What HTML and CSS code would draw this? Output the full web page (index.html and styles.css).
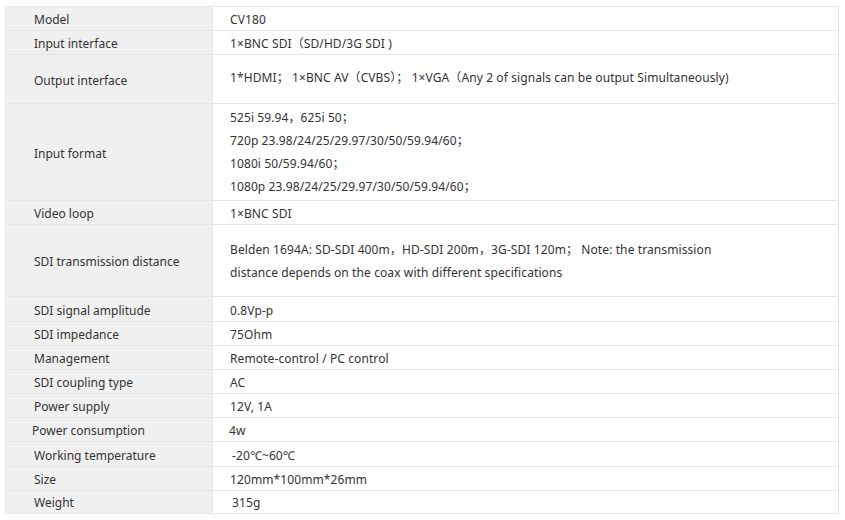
FILE: index.html
```html
<!DOCTYPE html>
<html lang="en">
<head>
  <meta charset="UTF-8" />
  <meta name="viewport" content="width=device-width, initial-scale=1.0"/>
  <title>CV180 Specifications</title>
  <link rel="stylesheet" href="styles.css">
</head>
<body>
  <table class="spec-table">
    <tr>
      <th>Model</th>
      <td>CV180</td>
    </tr>
    <tr>
      <th>Input interface</th>
      <td>1×BNC SDI（SD/HD/3G SDI )</td>
    </tr>
    <tr class="tall">
      <th>Output interface</th>
      <td class="out">1*HDMI； 1×BNC AV（CVBS）； 1×VGA（Any 2 of signals can be output Simultaneously)</td>
    </tr>
    <tr class="multi">
      <th>Input format</th>
      <td>
        525i 59.94，625i 50；<br>
        720p 23.98/24/25/29.97/30/50/59.94/60；<br>
        1080i 50/59.94/60；<br>
        1080p 23.98/24/25/29.97/30/50/59.94/60；
      </td>
    </tr>
    <tr>
      <th>Video loop</th>
      <td>1×BNC SDI</td>
    </tr>
    <tr class="tall">
      <th>SDI transmission distance</th>
      <td>Belden 1694A: SD-SDI 400m，HD-SDI 200m，3G-SDI 120m； Note: the transmission<br>
        distance depends on the coax with different specifications</td>
    </tr>
    <tr class="plus">
      <th>SDI signal amplitude</th>
      <td>0.8Vp-p</td>
    </tr>
    <tr>
      <th>SDI impedance</th>
      <td>75Ohm</td>
    </tr>
    <tr>
      <th>Management</th>
      <td>Remote-control / PC control</td>
    </tr>
    <tr>
      <th>SDI coupling type</th>
      <td>AC</td>
    </tr>
    <tr>
      <th>Power supply</th>
      <td>12V, 1A</td>
    </tr>
    <tr>
      <th class="shift">Power consumption</th>
      <td class="shift">4w</td>
    </tr>
    <tr class="plus">
      <th>Working temperature</th>
      <td class="nudge">-20℃~60℃</td>
    </tr>
    <tr>
      <th>Size</th>
      <td>120mm*100mm*26mm</td>
    </tr>
    <tr class="last">
      <th>Weight</th>
      <td class="nudge">315g</td>
    </tr>
  </table>
</body>
</html>
```

FILE: styles.css
```css
body {
  margin: 0;
  padding: 6px 0 0 5px;
  background: #fff;
  font-family: "Noto Sans", "Noto Sans CJK SC", sans-serif;
  font-size: 12px;
  color: #333;
}

.spec-table {
  width: 834px;
  border-collapse: collapse;
  border: 1px solid #e6e6e6;
}

.spec-table th,
.spec-table td {
  border-top: 1px solid #e6e6e6;
  line-height: 21px;
  padding: 2px 0 0 0;
  text-align: left;
  font-weight: normal;
  vertical-align: middle;
}

.spec-table th {
  width: 178px;
  padding-left: 28px;
  background: #f0f0f0;
  border-right: 1px solid #e6e6e6;
}

.spec-table td {
  padding-left: 17px;
  letter-spacing: 0.1px;
}

.spec-table .tall td {
  line-height: 23px;
  padding-top: 13px;
  padding-bottom: 12px;
}

.spec-table .tall td.out {
  padding-top: 11px;
  padding-bottom: 14px;
}

.spec-table .multi td {
  line-height: 23px;
  padding-top: 2px;
  padding-bottom: 2px;
}

.spec-table .plus td,
.spec-table .plus th {
  padding-top: 3px;
}

.spec-table .last td,
.spec-table .last th {
  line-height: 20px;
}

.spec-table th.shift {
  padding-left: 26px;
}

.spec-table td.shift {
  padding-left: 16px;
}

.spec-table td.nudge {
  padding-left: 19px;
}
```
